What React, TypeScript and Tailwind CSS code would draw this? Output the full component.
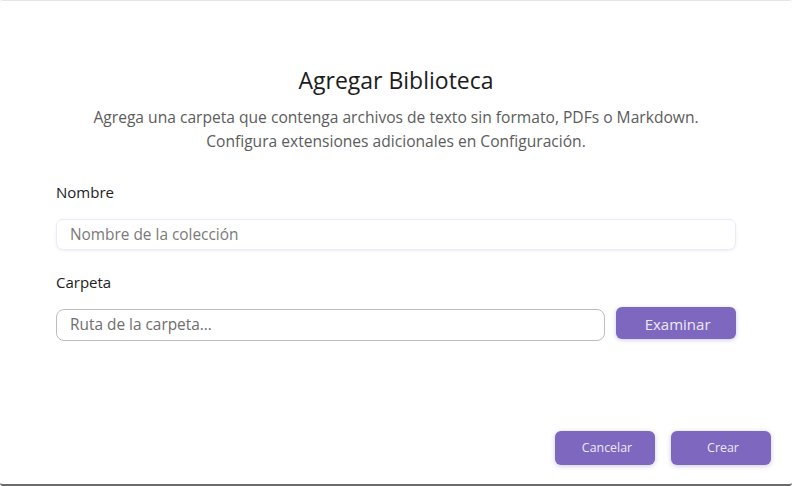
export default function App() {
  return (
    <div
      className="flex h-[486px] w-[792px] flex-col overflow-hidden rounded-[3px] border-t border-b-2 border-t-[#e6e6e6] border-b-[#6b6b6b] bg-white"
      style={{ fontFamily: '"Open Sans", sans-serif' }}
    >
      <div className="flex flex-col items-center pt-[64px]">
        <h1 className="text-[23px] leading-[30px] text-[#1c1c1c]">Agregar Biblioteca</h1>
        <p className="mt-[10px] text-center text-[15.6px] leading-[24px] text-[#5c5c5c]">
          Agrega una carpeta que contenga archivos de texto sin formato, PDFs o Markdown.
          <br />
          Configura extensiones adicionales en Configuración.
        </p>
      </div>

      <div className="mt-[28px] flex flex-col px-[56px]">
        <label className="text-[15px] leading-[22px] text-[#222]">Nombre</label>
        <div className="mt-[16px] flex h-[31px] items-center rounded-[7px] border border-[#ebeaf5] bg-white px-[13px] shadow-[0_1px_3px_rgba(120,110,180,0.12)]">
          <span className="text-[15.4px] text-[#7a7a7a]">Nombre de la colección</span>
        </div>

        <label className="mt-[21px] text-[15px] leading-[22px] text-[#222]">Carpeta</label>
        <div className="mt-[16px] flex items-center gap-[11px]">
          <div className="flex h-[32px] w-[550px] items-center rounded-[8px] border border-[#bdbdbd] bg-white px-[13px]">
            <span className="text-[15.4px] text-[#6e6e6e]">Ruta de la carpeta...</span>
          </div>
          <button className="-mt-[4px] flex h-[32px] w-[120px] items-center justify-center rounded-[6px] bg-[#7e67bf] pt-[3px] pl-[3px] text-[15px] text-[#ece8f8] shadow-[0_1px_4px_rgba(90,70,160,0.3)]">
            Examinar
          </button>
        </div>
      </div>

      <div className="mt-auto mb-[19px] flex justify-end gap-[16px] pr-[21px]">
        <button className="flex h-[34px] w-[100px] items-center justify-center rounded-[6px] bg-[#7e67bf] pl-[4px] text-[12.4px] text-[#ece8f8] shadow-[0_1px_5px_rgba(90,70,160,0.3)]">
          Cancelar
        </button>
        <button className="flex h-[34px] w-[100px] items-center justify-center rounded-[6px] bg-[#7e67bf] pl-[4px] text-[12.4px] text-[#ece8f8] shadow-[0_1px_5px_rgba(90,70,160,0.3)]">
          Crear
        </button>
      </div>
    </div>
  );
}
